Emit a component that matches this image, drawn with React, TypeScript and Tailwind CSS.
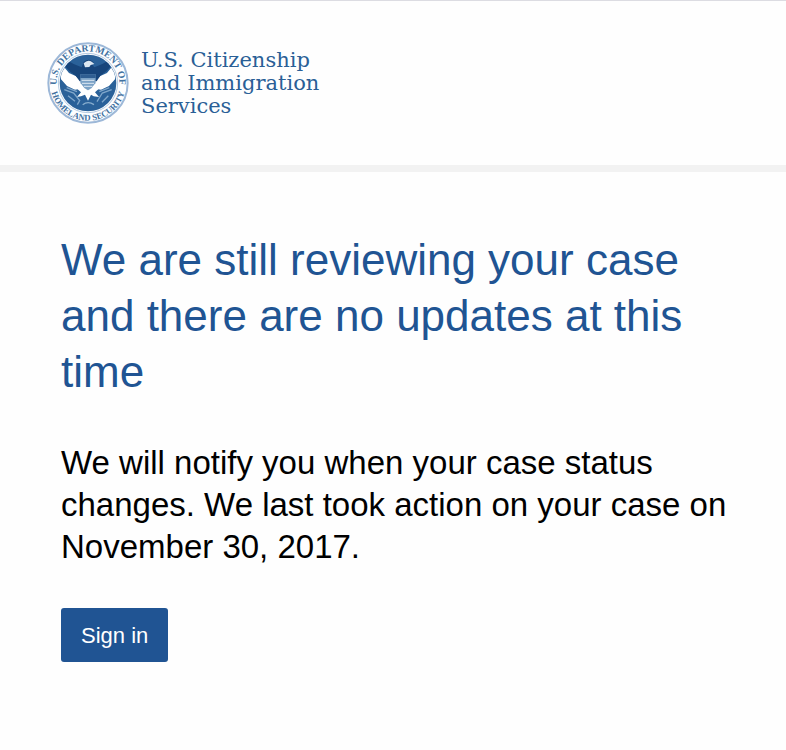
function Seal() {
  return (
    <svg viewBox="0 0 246 246" className="size-[82px] shrink-0" role="img" aria-label="Department of Homeland Security seal">
      <defs>
        <path id="ring-top" d="M 40.200 166.600 A 94 94 0 1 1 205.800 166.600" />
        <path id="ring-bottom" d="M 10 123 A 113 113 0 0 0 236 123" />
        <clipPath id="disc">
          <circle cx="123" cy="123" r="84" />
        </clipPath>
      </defs>
      <circle cx="123" cy="123" r="119" fill="#fdfeff" stroke="#9db8d8" strokeWidth="6" />
      <circle cx="123" cy="123" r="89" fill="none" stroke="#8eafd2" strokeWidth="2" />
      <circle cx="123" cy="123" r="85" fill="#2a6199" />
      <g clipPath="url(#disc)">
        <path d="M34 80 L52 76 L66 93 L86 102 L108 124 L102 140 L84 143 L60 132 L42 112Z" fill="#fff" />
        <path d="M212 80 L194 76 L180 93 L160 102 L138 124 L144 140 L162 143 L186 132 L204 112Z" fill="#fff" />
        <path
          d="M58 54 L80 66 L104 76 L110 60 Q126 46 140 61 L135 67 L142 76 L166 66 L188 54 L190 74 L178 88 L160 101 L149 118 L98 118 L86 101 L68 88 L56 74Z"
          fill="#17457b"
        />
        <path d="M110 64 Q122 51 135 60 L142 66 L131 69 L127 75 L114 76Z" fill="#dce8f2" />
        <path d="M100 97 H146 V123 Q143 138 123 145 Q103 138 100 123Z" fill="#7ba2c6" />
        <path d="M100 97 H146 V108 H100Z" fill="#2f5e92" />
        <path d="M104 115 H142 M105 124 H141 M111 133 H136" stroke="#dbe7f1" strokeWidth="3" />
        <path d="M92 142 L101 124 L112 138 L123 145 L134 138 L145 124 L154 142 L144 151 L156 165 L140 163 L132 158 L123 176 L114 158 L102 163 L90 165 L102 151Z" fill="#fff" />
        <path d="M52 143 L80 153 L98 176 L91 188 M59 137 L90 149 M63 161 L84 178 M194 143 L166 153 L150 179 M187 137 L157 149 M184 161 L165 181" fill="none" stroke="#7fa6ca" strokeWidth="4" />
        <path d="M107 188 Q123 176 141 188" fill="none" stroke="#87adce" strokeWidth="4" />
      </g>
      <g fill="#41719f" fontFamily="'Liberation Serif', serif" fontWeight="700" textAnchor="middle">
        <text fontSize="29">
          <textPath href="#ring-top" startOffset="50%">U.S. DEPARTMENT OF</textPath>
        </text>
        <text fontSize="26">
          <textPath href="#ring-bottom" startOffset="50%">HOMELAND SECURITY</textPath>
        </text>
      </g>
    </svg>
  );
}

export default function App() {
  return (
    <div className="min-h-screen border-t border-[#dcdce2] bg-[#fefefe] font-['Liberation_Sans',Arial,sans-serif]">
      <header className="flex items-center gap-3 border-b-[7px] border-[#f2f2f2] px-[47px] py-[41px]">
        <Seal />
        <p className="font-['DejaVu_Serif',serif] text-[21px] leading-[23px] text-[#2a5f96]">
          U.S. Citizenship
          <br />
          and Immigration
          <br />
          Services
        </p>
      </header>
      <main className="pt-[60px] pr-12 pb-20 pl-[61px]">
        <h1 className="text-[44px] leading-[56px] text-[#205493]">
          We are still reviewing your case and there are no updates at this time
        </h1>
        <p className="mt-[42px] text-[33px] leading-[42px] text-black">
          We will notify you when your case status changes. We last took action on your case on November 30, 2017.
        </p>
        <button type="button" className="mt-10 h-[54px] rounded-[3px] bg-[#205493] px-5 text-[22px] text-white">
          Sign in
        </button>
      </main>
    </div>
  );
}
